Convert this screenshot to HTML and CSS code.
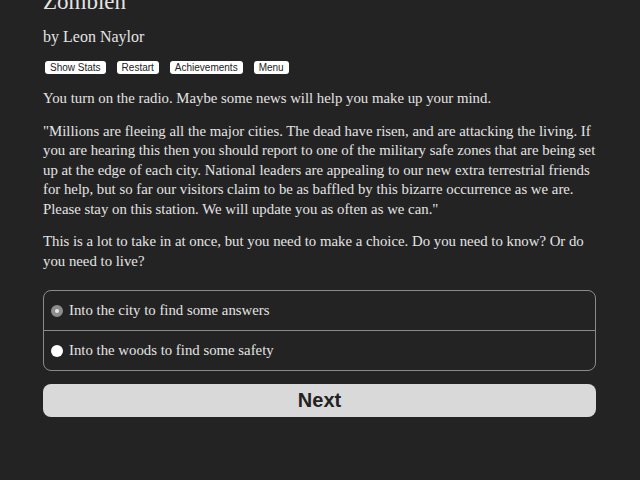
FILE: index.html
```html
<!DOCTYPE html>
<html lang="en">
  <head>
    <meta charset="UTF-8" />
    <title>Zombien</title>
    <link rel="stylesheet" href="styles.css">
  </head>
  <body>
    <div class="container">
      <div class="header">
        <h1 class="game-title">Zombien</h1>
        <h2 class="author">by Leon Naylor</h2>
        <div class="buttons">
          <button class="small-btn">Show Stats</button>
          <button class="small-btn">Restart</button>
          <button class="small-btn">Achievements</button>
          <button class="small-btn">Menu</button>
        </div>
      </div>

      <div class="text">
        <p>You turn on the radio. Maybe some news will help you make up your mind.</p>
        <p>"Millions are fleeing all the major cities. The dead have risen, and are attacking the living. If you are hearing this then you should report to one of the military safe zones that are being set up at the edge of each city. National leaders are appealing to our new extra terrestrial friends for help, but so far our visitors claim to be as baffled by this bizarre occurrence as we are. Please stay on this station. We will update you as often as we can."</p>
        <p>This is a lot to take in at once, but you need to make a choice. Do you need to know? Or do you need to live?</p>
      </div>

      <form class="choice">
        <label class="option">
          <span class="radio checked"></span>
          Into the city to find some answers
        </label>
        <label class="option">
          <span class="radio"></span>
          Into the woods to find some safety
        </label>
      </form>

      <button class="next">Next</button>
    </div>
  </body>
</html>
```
FILE: styles.css
```css
body {
  margin: 0;
  background-color: #232323;
  color: #e4e4e4;
  font-family: "Liberation Serif", serif;
}
.container {
  width: 553px;
  margin: -12px 0 0 43px;
}
.game-title {
  font-size: 23px;
  font-weight: normal;
  margin: 0;
  line-height: 28px;
}
.author {
  font-size: 16px;
  font-weight: normal;
  margin: 11px 0 0;
  line-height: 20px;
}
.buttons {
  display: flex;
  gap: 11px;
  margin: 14px 0 0 2px;
}
.small-btn {
  font-family: "Liberation Sans", sans-serif;
  font-size: 10px;
  background-color: #fff;
  color: #222;
  border: none;
  border-radius: 3px;
  padding: 0 5px;
  height: 13px;
  line-height: 13px;
}
.text {
  margin-top: 15px;
}
.text p {
  font-size: 14.8px;
  line-height: 19.5px;
  margin: 0 0 13px;
}
.choice {
  margin-top: 19px;
  border: 1px solid #8a8a8a;
  border-radius: 8px;
}
.option {
  display: flex;
  align-items: center;
  gap: 6px;
  height: 39px;
  padding-left: 7px;
  font-size: 14.8px;
}
.option + .option {
  border-top: 1px solid #8a8a8a;
}
.radio {
  width: 12px;
  height: 12px;
  border-radius: 50%;
  background-color: #fff;
  box-sizing: border-box;
}
.radio.checked {
  background-color: #e6e6e6;
  border: 4px solid #8d8d8d;
}
.next {
  display: block;
  width: 100%;
  height: 33px;
  margin-top: 13px;
  background-color: #d9d9d9;
  border: none;
  border-radius: 8px;
  color: #222;
  font-family: "Liberation Sans", sans-serif;
  font-weight: bold;
  font-size: 20px;
}
```
